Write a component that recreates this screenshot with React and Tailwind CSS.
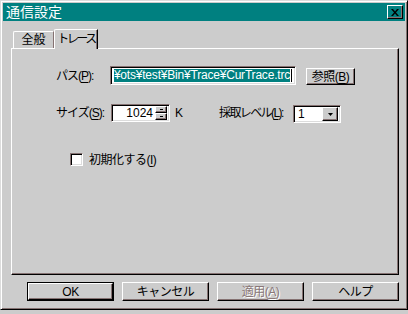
const raised =
    "border border-t-white border-l-white border-r-black border-b-black shadow-[inset_-1px_-1px_#857272]";
const sunken =
    "border border-t-[#857272] border-l-[#857272] border-r-white border-b-white shadow-[inset_1px_1px_#000,inset_-1px_-1px_#dcdcdc]";

const U = ({ children }) => <span className="underline underline-offset-2">{children}</span>;

const DlgButton = ({ children, isDefault, disabled }) => (
    <div className={isDefault ? "border border-black" : ""}>
        <div
            className={`${raised} ${isDefault ? "w-[85px] h-[17px]" : "w-[87px] h-[19px]"} flex items-center justify-center whitespace-nowrap text-[12px] tracking-[-0.5px] leading-none
                ${disabled ? "text-[#8a7878] [text-shadow:1px_1px_#fff]" : "text-black"}`}
        >
            {children}
        </div>
    </div>
);

const App = () => {
    return (
        <div className="w-[408px] h-[314px] bg-[#cccccc] font-['Liberation_Sans','Noto_Sans_CJK_JP',sans-serif] text-black">
            <div className="w-[408px] h-[310px] border border-t-[#dcdcdc] border-l-[#dcdcdc] border-r-black border-b-black shadow-[inset_1px_1px_#fff,inset_-1px_-1px_#857272] p-[2px] flex flex-col">
                {/* title bar */}
                <div className="h-[18px] bg-[#008080] flex items-center justify-between pl-[3px] pr-[2px]">
                    <span className="text-white text-[14px] leading-none whitespace-nowrap">通信設定</span>
                    <div className={`${raised} w-[16px] h-[14px] flex items-center justify-center`}>
                        <svg width="8" height="7" viewBox="0 0 8 7">
                            <path d="M0 0h2l2 2.5L6 0h2L5 3.5 8 7H6L4 4.5 2 7H0l3-3.5z" fill="#000" />
                        </svg>
                    </div>
                </div>

                <div className="flex-1 pl-[8px] pt-[8px]">
                    {/* tabs */}
                    <div className="flex items-end h-[19px] ml-[2px]">
                        <div className="w-[41px] h-[17px] border-t border-l border-white border-r border-r-[#857272] rounded-tl-[2px] flex items-center justify-center whitespace-nowrap text-[12px] leading-none">
                            全般
                        </div>
                        <div className="relative z-10 -mb-[1px] w-[44px] h-[20px] bg-[#cccccc] border-t border-l border-white border-r border-r-black shadow-[inset_-1px_0_#857272] rounded-tl-[2px] flex items-start justify-center pt-[3px] whitespace-nowrap text-[12px] tracking-[-2.5px] leading-none">
                            トレース
                        </div>
                    </div>

                    {/* panel */}
                    <div className="w-[388px] h-[227px] border border-t-white border-l-white border-r-black border-b-black shadow-[inset_-1px_-1px_#857272] pt-[17px] pl-[44px]">
                        <div className="flex items-end">
                            <div className="w-[54px] h-[18px] flex items-center whitespace-nowrap text-[12px] tracking-[-1px] leading-none">
                                パス(<U>P</U>):
                            </div>
                            <div className={`${sunken} w-[186px] h-[19px] flex items-center justify-end overflow-hidden pr-[3px] bg-white`}>
                                <span className="whitespace-nowrap bg-[#008080] text-white text-[12px] leading-[13px] tracking-[-0.2px]">
                                    ¥ots¥test¥Bin¥Trace¥CurTrace.trc
                                </span>
                                <span className="w-px h-[13px] bg-black ml-[1px] shrink-0" />
                            </div>
                            <div className={`${raised} ml-[10px] w-[49px] h-[17px] flex items-center justify-center whitespace-nowrap text-[12px] tracking-[-0.5px] leading-none`}>
                                参照(<U>B</U>)
                            </div>
                        </div>

                        <div className="flex items-center mt-[18px]">
                            <div className="w-[55px] whitespace-nowrap text-[12px] tracking-[-1px] leading-none">
                                サイズ(<U>S</U>):
                            </div>
                            <div className={`${sunken} w-[59px] h-[18px] bg-white flex items-center pl-[2px] pr-[2px]`}>
                                <span className="flex-1 text-right text-[12px] leading-none pr-[2px]">1024</span>
                                <div className="flex flex-col w-[12px] h-[14px]">
                                    <div className={`${raised} h-[7px] bg-[#cccccc] flex items-center justify-center`}>
                                        <span className="w-[3px] h-px bg-black" />
                                    </div>
                                    <div className={`${raised} h-[7px] bg-[#cccccc] flex items-center justify-center`}>
                                        <span className="w-[3px] h-px bg-black" />
                                    </div>
                                </div>
                            </div>
                            <span className="ml-[5px] text-[12px] leading-none">K</span>
                            <div className="ml-[36px] w-[74px] whitespace-nowrap text-[12px] tracking-[-1.6px] leading-none">
                                採取レベル(<U>L</U>):
                            </div>
                            <div className={`${sunken} w-[48px] h-[18px] bg-white flex items-center pl-[4px] pr-[2px] mt-[2px]`}>
                                <span className="flex-1 text-[12px] leading-none">1</span>
                                <div className={`${raised} w-[16px] h-[14px] bg-[#cccccc] flex items-center justify-center`}>
                                    <svg width="5" height="3" viewBox="0 0 5 3">
                                        <path d="M0 0h5L2.5 3z" fill="#000" />
                                    </svg>
                                </div>
                            </div>
                        </div>

                        <div className="flex items-center mt-[30px] ml-[14px]">
                            <div className={`${sunken} w-[13px] h-[13px] bg-white`} />
                            <span className="ml-[6px] whitespace-nowrap text-[12px] tracking-[-0.5px] leading-none">
                                初期化する(<U>I</U>)
                            </span>
                        </div>
                    </div>

                    {/* buttons */}
                    <div className="w-[388px] mt-[7px] flex justify-end gap-[8px]">
                        <DlgButton isDefault>OK</DlgButton>
                        <DlgButton>キャンセル</DlgButton>
                        <DlgButton disabled>
                            適用(<U>A</U>)
                        </DlgButton>
                        <DlgButton>ヘルプ</DlgButton>
                    </div>
                </div>
            </div>
        </div>
    );
};

export default App;
